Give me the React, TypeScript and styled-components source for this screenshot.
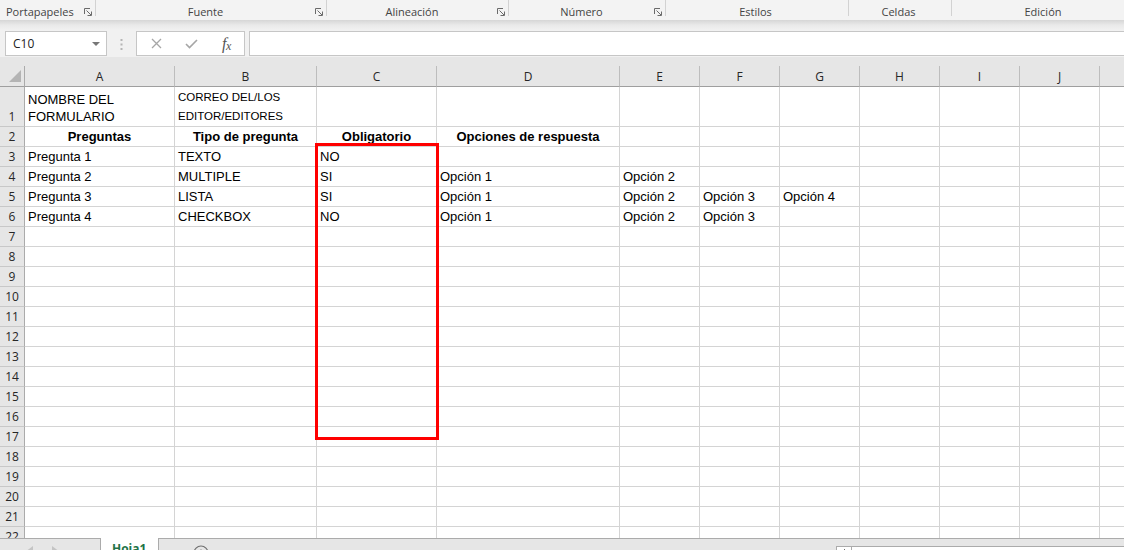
import React from 'react';
import styled, { createGlobalStyle } from 'styled-components';

const GlobalStyle = createGlobalStyle`
  html, body {
    margin: 0;
    padding: 0;
    background: #fff;
  }
  body {
    font-family: 'Open Sans', 'Noto Sans', sans-serif;
    overflow: hidden;
  }
  * {
    box-sizing: border-box;
  }
`;

type CellData = {
  text?: string;
  lines?: string[];
  bold?: boolean;
  center?: boolean;
  small?: boolean;
  lineHeight?: number;
};

const COLUMNS = [
  { id: 'A', width: 150 },
  { id: 'B', width: 142 },
  { id: 'C', width: 120 },
  { id: 'D', width: 183 },
  { id: 'E', width: 80 },
  { id: 'F', width: 80 },
  { id: 'G', width: 80 },
  { id: 'H', width: 80 },
  { id: 'I', width: 80 },
  { id: 'J', width: 80 },
  { id: 'K', width: 80 },
];

const ROW_COUNT = 23;

const SHEET: Record<number, Record<string, CellData>> = {
  1: {
    A: { lines: ['NOMBRE DEL', 'FORMULARIO'], lineHeight: 17 },
    B: { lines: ['CORREO DEL/LOS', 'EDITOR/EDITORES'], small: true },
  },
  2: {
    A: { text: 'Preguntas', bold: true, center: true },
    B: { text: 'Tipo de pregunta', bold: true, center: true },
    C: { text: 'Obligatorio', bold: true, center: true },
    D: { text: 'Opciones de respuesta', bold: true, center: true },
  },
  3: { A: { text: 'Pregunta 1' }, B: { text: 'TEXTO' }, C: { text: 'NO' } },
  4: {
    A: { text: 'Pregunta 2' },
    B: { text: 'MULTIPLE' },
    C: { text: 'SI' },
    D: { text: 'Opción 1' },
    E: { text: 'Opción 2' },
  },
  5: {
    A: { text: 'Pregunta 3' },
    B: { text: 'LISTA' },
    C: { text: 'SI' },
    D: { text: 'Opción 1' },
    E: { text: 'Opción 2' },
    F: { text: 'Opción 3' },
    G: { text: 'Opción 4' },
  },
  6: {
    A: { text: 'Pregunta 4' },
    B: { text: 'CHECKBOX' },
    C: { text: 'NO' },
    D: { text: 'Opción 1' },
    E: { text: 'Opción 2' },
    F: { text: 'Opción 3' },
  },
};

const RIBBON_GROUPS = [
  { label: 'Portapapeles', width: 96, launcher: true, align: 'left' },
  { label: 'Fuente', width: 231, launcher: true, align: 'center' },
  { label: 'Alineación', width: 182, launcher: true, align: 'center' },
  { label: 'Número', width: 157, launcher: true, align: 'center' },
  { label: 'Estilos', width: 183, launcher: false, align: 'center' },
  { label: 'Celdas', width: 103, launcher: false, align: 'center' },
  { label: 'Edición', width: 186, launcher: false, align: 'center' },
];

const Window = styled.div`
  width: 1124px;
  height: 550px;
  overflow: hidden;
  display: flex;
  flex-direction: column;
  background: #fff;
`;

/* ribbon group captions */
const RibbonLabels = styled.div`
  height: 20px;
  flex-shrink: 0;
  display: flex;
  background: #f3f3f3;
  font-size: 11px;
  color: #444;
`;

const RibbonGroup = styled.div<{ $width: number }>`
  position: relative;
  width: ${(p) => p.$width}px;
  flex-shrink: 0;
  display: flex;
  align-items: center;
  padding: 3px 4px 0 0;

  &::after {
    content: '';
    position: absolute;
    right: 0;
    top: 0;
    width: 1px;
    height: 16px;
    background: #d2d2d2;
  }
`;

const GroupLabel = styled.span<{ $align: string }>`
  flex: 1;
  white-space: nowrap;
  text-align: ${(p) => p.$align};
  padding-left: ${(p) => (p.$align === 'left' ? '6px' : '0')};
`;

const Launcher = styled.svg`
  width: 8px;
  height: 8px;
  flex-shrink: 0;
  margin-top: 1px;
`;

/* formula bar */
const FormulaArea = styled.div`
  height: 37px;
  flex-shrink: 0;
  display: flex;
  align-items: flex-start;
  padding: 11px 0 0 5px;
  background: linear-gradient(to bottom, #d6d6d6 0, #e9e9e9 5px, #f1f1f1 10px, #f1f1f1 100%);
`;

const NameBox = styled.div`
  width: 102px;
  height: 25px;
  background: #fff;
  border: 1px solid #c6c6c6;
  display: flex;
  align-items: center;
  justify-content: space-between;
  padding: 0 6px 0 7px;
  font-size: 12px;
  color: #222;
`;

const Dots = styled.svg`
  width: 3px;
  height: 11px;
  margin: 8px 13px 0 13px;
`;

const FxBox = styled.div`
  width: 109px;
  height: 25px;
  background: #fff;
  border: 1px solid #c6c6c6;
  display: flex;
  align-items: center;
  padding-left: 2px;
`;

const IconSlot = styled.div`
  width: 35px;
  display: flex;
  justify-content: center;
  align-items: center;
`;

const FxLabel = styled.span`
  font-family: 'Liberation Serif', 'DejaVu Serif', serif;
  font-style: italic;
  font-size: 16px;
  color: #555;
  letter-spacing: -0.5px;

  small {
    font-size: 12px;
    position: relative;
    top: 1px;
  }
`;

const FormulaInput = styled.div`
  flex: 1;
  height: 25px;
  margin-left: 4px;
  background: #fff;
  border: 1px solid #c6c6c6;
  border-right: none;
`;

/* worksheet grid */
const GridArea = styled.div`
  position: relative;
  height: 481px;
  flex-shrink: 0;
  overflow: hidden;
  background: #e6e6e6;
  padding-top: 9px;
`;

const gridColumns = `25px ${COLUMNS.map((c) => `${c.width}px`).join(' ')}`;

const Grid = styled.div`
  display: grid;
  grid-template-columns: ${gridColumns};
  grid-template-rows: 21px 40px;
  grid-auto-rows: 20px;
  width: max-content;
`;

const Corner = styled.div`
  background: #e6e6e6;
  border-right: 1px solid #ababab;
  border-bottom: 1px solid #9f9f9f;
  display: flex;
  justify-content: flex-end;
  align-items: flex-end;
  padding: 0 3px 4px 0;
`;

const ColHead = styled.div`
  background: #e6e6e6;
  border-right: 1px solid #bdbdbd;
  border-bottom: 1px solid #9f9f9f;
  display: flex;
  align-items: center;
  justify-content: center;
  font-size: 12px;
  color: #262626;
`;

const RowHead = styled.div`
  background: #e6e6e6;
  border-right: 1px solid #ababab;
  border-bottom: 1px solid #c8c8c8;
  display: flex;
  align-items: flex-end;
  justify-content: center;
  font-size: 12px;
  line-height: 19px;
  color: #262626;
`;

const Cell = styled.div<{ $bold?: boolean; $center?: boolean; $small?: boolean; $lh: number }>`
  background: #fff;
  border-right: 1px solid #d4d4d4;
  border-bottom: 1px solid #d4d4d4;
  display: flex;
  flex-direction: column;
  justify-content: flex-end;
  align-items: ${(p) => (p.$center ? 'center' : 'flex-start')};
  padding: 0 3px ${(p) => (p.$lh === 19 ? '0' : '1px')} 3px;
  font-family: 'Liberation Sans', Arial, sans-serif;
  font-size: ${(p) => (p.$small ? '11.5px' : '13px')};
  font-weight: ${(p) => (p.$bold ? 700 : 400)};
  line-height: ${(p) => p.$lh}px;
  color: #000;
  white-space: nowrap;
`;

const Highlight = styled.div`
  position: absolute;
  left: 315px;
  top: 86px;
  width: 124px;
  height: 297px;
  border: 3px solid #ff0000;
  pointer-events: none;
`;

/* sheet tabs + scroll bar */
const SheetBar = styled.div`
  height: 26px;
  flex-shrink: 0;
  display: flex;
  background: #e6e6e6;
`;

const NavArea = styled.div`
  width: 101px;
  flex-shrink: 0;
  border-top: 1px solid #ababab;
  border-right: 1px solid #ababab;
  display: flex;
  align-items: flex-start;
  gap: 19px;
  padding: 7px 0 0 27px;
`;

const SheetTab = styled.div`
  width: 58px;
  flex-shrink: 0;
  background: #fff;
  border-right: 1px solid #ababab;
  padding: 3px 0 0 11px;
  font-size: 12px;
  font-weight: 700;
  line-height: 16px;
  color: #217346;
`;

const AddArea = styled.div`
  flex: 1;
  border-top: 1px solid #ababab;
  padding: 5px 0 0 34px;
`;

const ScrollDots = styled.div`
  width: 24px;
  flex-shrink: 0;
  border-top: 1px solid #ababab;
  padding: 8px 0 0 7px;
`;

const ScrollTrack = styled.div`
  width: 288px;
  flex-shrink: 0;
  display: flex;
  flex-direction: column;
  border-top: 1px solid #ababab;
  padding-top: 7px;
`;

const ScrollInner = styled.div`
  flex: 1;
  display: flex;
  background: #fff;
  border-top: 1px solid #ababab;
  border-left: 1px solid #ababab;
`;

const ScrollButton = styled.div`
  width: 15px;
  border-right: 1px solid #ababab;
  display: flex;
  justify-content: center;
  padding-top: 2px;
`;

const LauncherIcon = () => (
  <Launcher viewBox="0 0 8 8" fill="none" stroke="#6a6a6a" strokeWidth="1">
    <path d="M0.5 6V0.5H6" />
    <path d="M2.5 2.5L7 7M7.5 3.5V7.5H3.5" />
  </Launcher>
);

const cellKey = (row: number, col: string) => `${col}${row}`;

const App: React.FC = () => {
  const rows = Array.from({ length: ROW_COUNT }, (_, i) => i + 1);

  return (
    <>
      <GlobalStyle />
      <Window>
        <RibbonLabels>
          {RIBBON_GROUPS.map((g) => (
            <RibbonGroup key={g.label} $width={g.width}>
              <GroupLabel $align={g.align}>{g.label}</GroupLabel>
              {g.launcher && <LauncherIcon />}
            </RibbonGroup>
          ))}
        </RibbonLabels>

        <FormulaArea>
          <NameBox>
            <span>C10</span>
            <svg width="8" height="4" viewBox="0 0 8 4">
              <path d="M0 0H8L4 4Z" fill="#777" />
            </svg>
          </NameBox>
          <Dots viewBox="0 0 3 11">
            <rect x="0.5" y="0" width="2" height="2" fill="#b5b5b5" />
            <rect x="0.5" y="4.5" width="2" height="2" fill="#b5b5b5" />
            <rect x="0.5" y="9" width="2" height="2" fill="#b5b5b5" />
          </Dots>
          <FxBox>
            <IconSlot>
              <svg width="11" height="11" viewBox="0 0 11 11" stroke="#a6a6a6" strokeWidth="1.3">
                <path d="M1 1L10 10M10 1L1 10" />
              </svg>
            </IconSlot>
            <IconSlot>
              <svg width="13" height="10" viewBox="0 0 13 10" fill="none" stroke="#a6a6a6" strokeWidth="1.6">
                <path d="M1 5L4.5 8.5L12 1" />
              </svg>
            </IconSlot>
            <IconSlot>
              <FxLabel>
                f<small>x</small>
              </FxLabel>
            </IconSlot>
          </FxBox>
          <FormulaInput />
        </FormulaArea>

        <GridArea>
          <Grid>
            <Corner>
              <svg width="12" height="12" viewBox="0 0 12 12">
                <path d="M12 0V12H0Z" fill="#b4b4b4" />
              </svg>
            </Corner>
            {COLUMNS.map((c) => (
              <ColHead key={c.id}>{c.id}</ColHead>
            ))}
            {rows.map((r) => (
              <React.Fragment key={r}>
                <RowHead>{r}</RowHead>
                {COLUMNS.map((c) => {
                  const data = SHEET[r]?.[c.id];
                  return (
                    <Cell
                      key={cellKey(r, c.id)}
                      $bold={data?.bold}
                      $center={data?.center}
                      $small={data?.small}
                      $lh={data?.lineHeight ?? 19}
                    >
                      {data?.lines
                        ? data.lines.map((l) => <span key={l}>{l}</span>)
                        : data?.text}
                    </Cell>
                  );
                })}
              </React.Fragment>
            ))}
          </Grid>
          <Highlight />
        </GridArea>

        <SheetBar>
          <NavArea>
            <svg width="6" height="9" viewBox="0 0 6 9">
              <path d="M6 0V9L0 4.5Z" fill="#c4c4c4" />
            </svg>
            <svg width="6" height="9" viewBox="0 0 6 9">
              <path d="M0 0V9L6 4.5Z" fill="#c4c4c4" />
            </svg>
          </NavArea>
          <SheetTab>Hoja1</SheetTab>
          <AddArea>
            <svg width="16" height="16" viewBox="0 0 16 16" fill="none" stroke="#6f6f6f" strokeWidth="1.2">
              <circle cx="8" cy="8" r="7" />
              <path d="M8 4.5V11.5M4.5 8H11.5" />
            </svg>
          </AddArea>
          <ScrollDots>
            <svg width="2" height="8" viewBox="0 0 2 8">
              <rect x="0" y="0" width="2" height="2" fill="#9a9a9a" />
              <rect x="0" y="4" width="2" height="2" fill="#9a9a9a" />
            </svg>
          </ScrollDots>
          <ScrollTrack>
            <ScrollInner>
              <ScrollButton>
                <svg width="5" height="5" viewBox="0 0 5 5">
                  <path d="M2.5 0V5" stroke="#6f6f6f" strokeWidth="1" />
                </svg>
              </ScrollButton>
            </ScrollInner>
          </ScrollTrack>
        </SheetBar>
      </Window>
    </>
  );
};

export default App;
